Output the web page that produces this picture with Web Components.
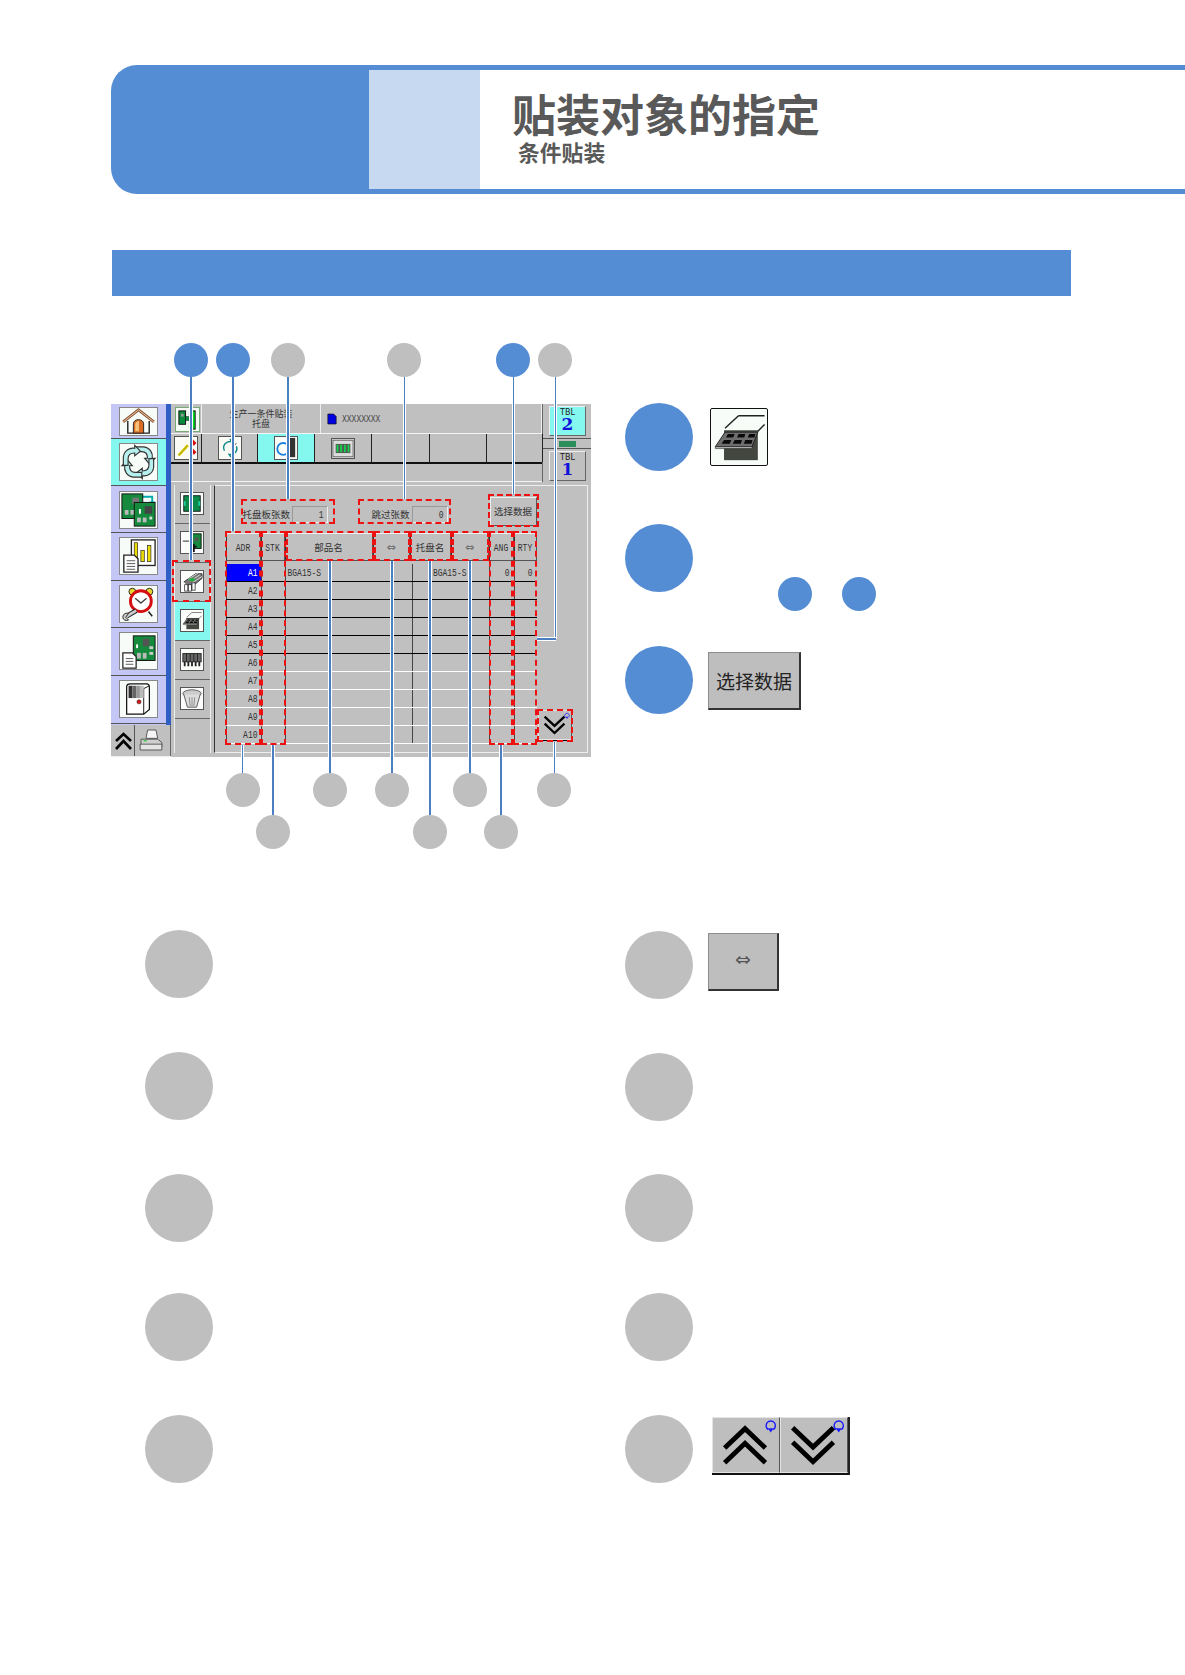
<!DOCTYPE html>
<html lang="zh">
<head>
<meta charset="utf-8">
<title>贴装对象的指定</title>
<style>
  html, body { margin: 0; background: #fff; }
  body { width: 1185px; height: 1675px; overflow: hidden; font-family: "Liberation Sans", "Noto Sans CJK SC", sans-serif; }
  .band { display: block; margin: 56px 0 0 111.500px; width: 959.500px; height: 46px; background: #548dd4; }
  .overview { display: grid; grid-template-columns: 625px 1fr; height: 590px; margin-top: 44px; }
  .steps-top { display: grid; grid-auto-rows: 121.3px; padding-top: 63px; --c: #548dd4; }
  .lower { display: grid; grid-template-columns: 144.500px 480.500px 1fr; }
  .lower-col { display: grid; grid-template-rows: 122px 121.500px 119.500px 122px 68px; }
  .lower-col.left { grid-column: 2; }
  .lower-col.right { grid-column: 3; padding-top: .5px; grid-template-rows: 122px 121.500px 118.500px 122px 68px; }
</style>
</head>
<body>

<script>
const BLADE = "M16 3H25C32 4 35 10 34 15H37L31 21 26 15H29C29 11 27 8 23 8H16Z";
const ICONS = {
  home: `<svg viewBox="0 0 39 29"><path d="M3 15 19.500 2 36 15" fill="none" stroke="#8a5a3a" stroke-width="3"/><path d="M3 15 19.500 2 36 15" fill="none" stroke="#f3c9a8" stroke-width="1"/><path d="M8 14V27H31V14" fill="none" stroke="#222" stroke-width="1.500"/><path d="M14 27V17C14 11 25 11 25 17V27Z" fill="#d96c22" stroke="#222"/><path d="M16 25V18C16 15 19 14 20 14V25Z" fill="#f4c27a"/></svg>`,
  cycle: `<svg viewBox="0 0 39 38">${[0, 90, 180, 270].map(a => `<path transform="rotate(${a} 19.500 19)" d="${BLADE}" fill="#b5f0ee" stroke="#333" stroke-width="1.200"/>`).join("")}</svg>`,
  boards: `<svg viewBox="0 0 39 38"><path d="M22 5H34V12" fill="none" stroke="#0aa" stroke-width="2"/><path d="M31 10 34 15 37 10Z" fill="#0aa"/><rect x="2" y="2" width="22" height="26" fill="#168a3c" stroke="#111"/><rect x="13" y="6" width="7" height="7" fill="#777"/><rect x="5" y="19" width="4" height="5" fill="#bbb"/><rect x="11" y="19" width="4" height="5" fill="#bbb"/><rect x="15" y="11" width="22" height="25" fill="#168a3c" stroke="#111"/><rect x="26" y="15" width="8" height="8" fill="#444"/><rect x="18" y="27" width="4" height="5" fill="#bbb"/><rect x="24" y="27" width="4" height="5" fill="#bbb"/><rect x="20" y="18" width="2" height="5" fill="#fff"/><rect x="31" y="26" width="3" height="3" fill="#ddd"/></svg>`,
  chart: `<svg viewBox="0 0 39 38"><rect x="12" y="2" width="25" height="27" fill="#fff" stroke="#222" stroke-width="1.400"/><rect x="15" y="5" width="3.600" height="20" fill="#eddc00" stroke="#222" stroke-width=".7"/><rect x="22" y="13" width="3.600" height="12" fill="#eddc00" stroke="#222" stroke-width=".7"/><rect x="29" y="8" width="3.600" height="17" fill="#eddc00" stroke="#222" stroke-width=".7"/><path d="M4 18H15L19 22V36H4Z" fill="#fff" stroke="#222" stroke-width="1.400"/><path d="M7 24H16M7 27H16M7 30H16M7 33H16" stroke="#555"/></svg>`,
  clock: `<svg viewBox="0 0 39 38"><circle cx="13" cy="6" r="3.600" fill="#e8d832" stroke="#222"/><circle cx="31" cy="6" r="3.600" fill="#e8d832" stroke="#222"/><path d="M14 27 11 31M30 27 34 32" stroke="#222" stroke-width="1.600"/><circle cx="22" cy="16" r="11" fill="#fff" stroke="#d50c10" stroke-width="3"/><path d="M16 13 22 18 28 13" fill="none" stroke="#444" stroke-width="1.500"/><path d="M17 26 7 32" stroke="#222" stroke-width="5"/><path d="M17 26 7 32" stroke="#ccc" stroke-width="3"/><path d="M3 33C3 29 7 28 9 29L6 33 9 36C6 37 3 36 3 33Z" fill="#ccc" stroke="#222"/></svg>`,
  pcbdoc: `<svg viewBox="0 0 39 38"><rect x="14" y="3" width="23" height="26" fill="#168a3c" stroke="#111"/><rect x="24" y="6" width="7" height="8" fill="#555"/><rect x="18" y="21" width="4" height="6" fill="#bbb"/><rect x="24" y="21" width="4" height="6" fill="#bbb"/><rect x="31" y="14" width="4" height="3" fill="#ccc"/><rect x="31" y="20" width="4" height="3" fill="#ccc"/><rect x="17" y="12" width="2" height="4" fill="#fff"/><path d="M3 21H13L17 25V37H3Z" fill="#fff" stroke="#222" stroke-width="1.300"/><path d="M6 27H14M6 30H14M6 33H14" stroke="#555"/></svg>`,
  machine: `<svg viewBox="0 0 39 38"><path d="M7 6C7 4 9 3 11 3H28C30 3 31 5 31 7V30L25 35H7Z" fill="#fff" stroke="#111" stroke-width="1.300"/><path d="M31 5 25 8V35" fill="none" stroke="#111" stroke-width="1"/><rect x="9" y="5" width="4" height="13" fill="#333"/><rect x="13" y="5" width="4" height="13" fill="#666"/><rect x="17" y="5" width="4" height="13" fill="#999"/><rect x="21" y="5" width="4" height="13" fill="#bbb"/><circle cx="20" cy="22" r="2.200" fill="#d81414" stroke="#333" stroke-width=".6"/></svg>`,
  board: `<svg viewBox="0 0 24 23"><rect x="3" y="3" width="18" height="17" fill="#0b8a4a" stroke="#111"/><rect x="10" y="3" width="1.500" height="17" fill="#111"/><rect x="3" y="9" width="2" height="5" fill="#1fd0a0"/><rect x="19" y="9" width="2" height="5" fill="#1fd0a0"/></svg>`,
  boardout: `<svg viewBox="0 0 24 23"><rect x="10" y="2" width="12" height="16" fill="#168a3c" stroke="#111"/><rect x="15" y="6" width="4" height="4" fill="#555"/><path d="M2 10H14" stroke="#666" stroke-width="1.500"/><path d="M14 13V22" stroke="#111" stroke-width="2"/><path d="M11 16H17" stroke="#111" stroke-width="2"/></svg>`,
  stack: `<svg viewBox="0 0 24 23"><path d="M3 12 16 3H23V8L10 19" fill="#777" stroke="#333"/><path d="M8 9 19 2M10 11 21 4M12 13 23 6" stroke="#ddd"/><rect x="9" y="8" width="6" height="3" fill="#1cb03c"/><rect x="4" y="15" width="3.400" height="7" fill="#fff" stroke="#222" stroke-width=".8"/><rect x="8" y="15" width="3.400" height="7" fill="#fff" stroke="#222" stroke-width=".8"/><rect x="12" y="13" width="3.400" height="8" fill="#fff" stroke="#222" stroke-width=".8"/></svg>`,
  tray: `<svg viewBox="0 0 57 58"><path d="M28 7H55M14 20 28 7M55 16 46 25" fill="none" stroke="#222" stroke-width="1.500"/><rect x="13" y="22" width="35" height="31" fill="#44473f"/><path d="M4 39 14 24H48L42 39Z" fill="#6e6e6e" stroke="#222"/><path d="M4 39H42V41H4Z" fill="#bbb" stroke="#222" stroke-width=".6"/><g fill="#0a0a0a"><path d="M17 26h7l-1.500 3.500h-7.500zM28 26h7l-1 3.500h-7.500zM39 26h6.500l-1 3.500h-7zM13 32h7.500l-1.500 4h-8.500zM24 32h7.500l-1 4h-8.500zM35 32h7.500l-1 4h-8z"/></g></svg>`,
  feeder: `<svg viewBox="0 0 24 23"><rect x="2" y="5" width="20" height="9" fill="#666" stroke="#222"/><path d="M6 5V14M10 5V14M14 5V14M18 5V14" stroke="#222"/><path d="M4 14V19M8 14V19M12 14V19M16 14V19M20 14V19" stroke="#222" stroke-width="2"/></svg>`,
  trash: `<svg viewBox="0 0 24 23"><ellipse cx="12" cy="6" rx="10" ry="4" fill="#ccc" stroke="#555"/><path d="M3 7 7 21H17L21 7" fill="#ddd" stroke="#555"/><path d="M9 10 10 20M12 10V20M15 10 14 20" stroke="#888"/></svg>`,
  doc: `<svg viewBox="0 0 12 14"><path d="M1 1H8L11 4V13H1Z" fill="#0000e0" stroke="#111" stroke-width=".8"/></svg>`,
  tool: `<svg viewBox="0 0 24 24"><path d="M4 20 14 9" stroke="#e4d400" stroke-width="3"/><path d="M4 20 14 9" stroke="#555" stroke-width=".6"/><path d="M18 4 22 8M17 13 22 18" stroke="#d50c10" stroke-width="4"/></svg>`,
  cyc2: `<svg viewBox="0 0 24 24"><path d="M6 15C3 9 8 4 14 5L12 2M19 10C21 15 17 20 11 19L13 22" fill="none" stroke="#188" stroke-width="1.500"/><path d="M13 12 19 7" stroke="#333"/></svg>`,
  blueo: `<svg viewBox="0 0 24 24"><rect x="12" y="1" width="10" height="21" fill="#333"/><rect x="8" y="2" width="5" height="20" fill="#fff"/><circle cx="9" cy="13" r="6.500" fill="none" stroke="#1a80e0" stroke-width="2"/></svg>`,
  ioboard: `<svg viewBox="0 0 24 20"><rect x="1" y="1" width="22" height="18" fill="#ddd" stroke="#666"/><rect x="4" y="5" width="16" height="10" fill="#555"/><path d="M6 6V14M10 6V14M14 6V14M18 6V14" stroke="#15d04a" stroke-width="2"/></svg>`,
  head: `<svg viewBox="0 0 24 24"><rect x="3" y="3" width="7" height="14" fill="#0a8a3c" stroke="#111"/><rect x="5" y="6" width="3" height="3" fill="#999"/><rect x="14" y="3" width="6" height="19" fill="#00dd22" stroke="#111"/><rect x="10" y="9" width="5" height="4" fill="#0a8a3c" stroke="#111" stroke-width=".5"/></svg>`,
  printer: `<svg viewBox="0 0 36 30"><path d="M14 3H24L26 13H12Z" fill="#f5f5f5" stroke="#444"/><path d="M6 14H26L31 18V23H6Z" fill="#cfcfcf" stroke="#444"/><path d="M5 20H31V27H5Z" fill="#e4e4e4" stroke="#444"/><path d="M9 16H13" stroke="#3c3" stroke-width="1.500"/></svg>`
};

class RsIcon extends HTMLElement {
  constructor() {
    super();
    this.attachShadow({mode: "open"});
  }
  connectedCallback() {
    this.shadowRoot.innerHTML = `
      <style>
        :host { display: block; }
        svg { display: block; width: 100%; height: 100%; }
      </style>
      ${ICONS[this.getAttribute("name")] || ""}`;
  }
}
customElements.define("rs-icon", RsIcon);

class RsHero extends HTMLElement {
  constructor() {
    super();
    this.attachShadow({mode: "open"}).innerHTML = `
      <style>
        :host { display: flex; height: 129px; margin: 65px 0 0 111px; }
        .lead { width: 258px; background: #548dd4; border-radius: 26px 0 0 26px; }
        .rest { flex: 1; display: flex; border-top: 5px solid #548dd4; border-bottom: 5px solid #548dd4; }
        .tint { width: 111px; background: #c6d9f0; }
        .text { flex: 1; padding: 20px 0 0 32px; color: #595959; font-weight: bold; font-family: "Liberation Sans", "Noto Sans CJK SC", sans-serif; }
        h1 { margin: 0; font-size: 44px; line-height: 54px; font-weight: bold; }
        p { margin: -3px 0 0 6px; font-size: 21.800px; line-height: 26px; }
      </style>
      <div class="lead"></div>
      <div class="rest">
        <div class="tint"></div>
        <div class="text"><h1><slot name="title"></slot></h1><p><slot name="sub"></slot></p></div>
      </div>`;
  }
}
customElements.define("rs-hero", RsHero);

// numbered dot, blank as in the source picture
class RsDot extends HTMLElement {
  constructor() {
    super();
    this.attachShadow({mode: "open"}).innerHTML = `
      <style>
        :host { display: block; width: var(--d, 68px); height: var(--d, 68px); border-radius: 50%; background: var(--c, #bfbfbf); flex: none; }
      </style>`;
  }
}
customElements.define("rs-dot", RsDot);

class RsStep extends HTMLElement {
  constructor() {
    super();
    this.attachShadow({mode: "open"}).innerHTML = `
      <style>
        :host { display: flex; align-items: flex-start; gap: var(--gap, 15px); }
        .body { padding-top: var(--top, 5px); }
      </style>
      <rs-dot></rs-dot>
      <div class="body"><slot></slot></div>`;
  }
}
customElements.define("rs-step", RsStep);

class RsKey extends HTMLElement {
  constructor() {
    super();
    this.attachShadow({mode: "open"}).innerHTML = `
      <style>
        :host { display: flex; align-items: center; justify-content: center; box-sizing: border-box; width: var(--w, 93px); height: 58px; padding-bottom: var(--pb, 0); background: #bebebe; border: 1px solid #8c8c8c; border-right: 2px solid #333; border-bottom: 2px solid #333; color: #222; font: 19px "Noto Sans CJK SC", sans-serif; }
      </style>
      <slot></slot>`;
  }
}
customElements.define("rs-key", RsKey);

class RsChevron extends HTMLElement {
  constructor() {
    super();
    this.attachShadow({mode: "open"});
  }
  connectedCallback() {
    const up = this.hasAttribute("up");
    this.shadowRoot.innerHTML = `
      <style>
        :host { display: block; box-sizing: border-box; background: #bebebe; border: 1px solid #e4e4e4; border-right-color: #555; width: 100%; height: 100%; }
        svg { display: block; width: 100%; height: 100%; }
      </style>
      <svg viewBox="0 0 68 56">
        <g fill="none" stroke="#000" stroke-width="5" transform="${up ? "" : "rotate(180 33 28)"}">
          <path d="M12 31 33 11 54 31"/><path d="M12 46 33 26 54 46"/>
        </g>
        <g fill="none" stroke="#1a1aff" stroke-width="1.500">
          <path d="M57 12A4.800 4.800 0 1 1 62 12"/><path d="M56.500 10.500H62.500L59.500 15Z" fill="#1a1aff" stroke="none"/>
        </g>
      </svg>`;
  }
}
customElements.define("rs-chevron", RsChevron);

class RsNav extends HTMLElement {
  constructor() {
    super();
    const items = [["home", 35, 29, 3], ["cycle", 47, 38, 4, true], ["boards", 47, 38, 5], ["chart", 48, 38, 4], ["clock", 47, 38, 4], ["pcbdoc", 48, 38, 4], ["machine", 48, 38, 4]];
    const html = items.map(([n, h, bh, top, on]) => `
      <div class="item${on ? " on" : ""}" style="height:${h}px;padding-top:${top}px">
        <div class="btn" style="height:${bh}px"><rs-icon name="${n}"></rs-icon></div>
      </div>`).join("");
    this.attachShadow({mode: "open"}).innerHTML = `
      <style>
        :host { display: flex; flex-direction: column; width: 60px; }
        .list { background: #c4c6f5; border-right: 5px solid #2f5fc4; height: 321px; }
        .item { box-sizing: border-box; border-bottom: 1.500px solid #555; }
        .item.on { background: #84f7ef; }
        .btn { box-sizing: border-box; width: 39px; margin-left: 8px; background: #f8fcf8; border: 1px solid #888; }
        rs-icon { width: 100%; height: 100%; }
        .foot { display: flex; height: 31px; background: #c0c0c0; border-bottom: 1px solid #eee; }
        .up { width: 24px; border-right: 1px solid #555; padding-top: 6px; box-sizing: border-box; }
        .up svg { display: block; width: 19px; height: 20px; margin-left: 3px; }
        .print { flex: 1; border-right: 1.500px solid #666; padding: 2px 0 0 1px; }
        .print rs-icon { width: 30px; height: 26px; }
      </style>
      <div class="list">${html}</div>
      <div class="foot">
        <div class="up"><svg viewBox="0 0 19 20"><path d="M2 10 9.500 3 17 10M2 18 9.500 10 17 18" fill="none" stroke="#000" stroke-width="2.600"/></svg></div>
        <div class="print"><rs-icon name="printer"></rs-icon></div>
      </div>`;
  }
}
customElements.define("rs-nav", RsNav);

class RsTopbar extends HTMLElement {
  constructor() {
    super();
    this.attachShadow({mode: "open"}).innerHTML = `
      <style>
        :host { display: grid; grid-template-columns: 372px 48px; height: 77px; background: #c0c0c0; }
        .rows { border-right: 1.500px solid #666; }
        .m { display: inline-block; transform: scaleY(1.4); }
        .head { display: grid; grid-template-columns: 31px 119px 1fr; height: 30px; border-bottom: 1px solid #f4f4f4; box-sizing: border-box; }
        .head > div { border-right: 1px solid #eee; box-sizing: border-box; }
        .ic { padding: 3px 0 0 4px; }
        .ic .f { width: 25px; height: 25px; background: #f6fbf6; border: 1px solid #7a7; box-sizing: border-box; }
        .title { font: 9px/10px "Noto Sans CJK SC", sans-serif; color: #333; text-align: center; padding-top: 5px; white-space: nowrap; }
        .doc { display: flex; align-items: center; gap: 5px; padding-left: 6px; font: 8px "Liberation Mono", monospace; color: #444; }
        .doc rs-icon { width: 10px; height: 12px; }
        .tabs { display: grid; grid-template-columns: 31px 56px 57px 57px 58px 57px 56px; height: 30px; border-bottom: 2px solid #111; box-sizing: border-box; }
        .tab { border-right: 1px solid #222; display: flex; justify-content: center; padding-top: 2px; box-sizing: border-box; }
        .tab.on { background: #84f7ef; }
        .tab rs-icon { width: 24px; height: 24px; background: #fbfbf6; border: 1px solid #555; box-sizing: border-box; }
        .tab rs-icon.g { background: #ddd; height: 21px; margin-top: 2px; }
        .spare { height: 17px; border-bottom: 1px solid #f4f4f4; }
        .tbl { padding: 2px 5px 0 6px; }
        .t { box-sizing: border-box; height: 30px; border: 1px solid #eee; border-right-color: #666; border-bottom-color: #666; text-align: center; font: 8px/8px "DejaVu Sans", sans-serif; color: #222; padding-top: 2px; }
        .t.on { background: #84f7ef; }
        .t b { display: block; font: bold 17px/15px "DejaVu Serif", serif; color: #1212d8; }
        .lamp { height: 9px; margin: 2px -5px 2px -6px; border-top: 1px solid #555; border-bottom: 1px solid #555; display: flex; justify-content: center; align-items: center; }
        .lamp i { display: block; width: 17px; height: 6px; background: #2a8f5a; }
      </style>
      <div class="rows">
        <div class="head">
          <div class="ic"><div class="f"><rs-icon name="head"></rs-icon></div></div>
          <div class="title">生产一条件贴装<br>托盘</div>
          <div class="doc"><rs-icon name="doc"></rs-icon><span class="m">XXXXXXXX</span></div>
        </div>
        <div class="tabs">
          <div class="tab"><rs-icon name="tool"></rs-icon></div>
          <div class="tab"><rs-icon name="cyc2"></rs-icon></div>
          <div class="tab on"><rs-icon name="blueo"></rs-icon></div>
          <div class="tab"><rs-icon class="g" name="ioboard"></rs-icon></div>
          <div class="tab"></div><div class="tab"></div><div class="tab"></div>
        </div>
        <div class="spare"></div>
      </div>
      <div class="tbl">
        <div class="t on">TBL<b>2</b></div>
        <div class="lamp"><i></i></div>
        <div class="t">TBL<b>1</b></div>
      </div>`;
  }
}
customElements.define("rs-topbar", RsTopbar);

class RsSide extends HTMLElement {
  constructor() {
    super();
    const names = ["board", "boardout", "stack", "tray", "feeder", "trash"];
    this.attachShadow({mode: "open"}).innerHTML = `
      <style>
        :host { display: block; width: 37px; border-left: 1px solid #eee; border-right: 1px solid #eee; box-sizing: border-box; }
        .c { box-sizing: border-box; height: 39px; border-bottom: 1px solid #666; padding: 7px 0 0 5px; }
        .c.on { background: #84f7ef; }
        rs-icon { width: 24px; height: 23px; background: #fafdf9; border: 1px solid #555; box-sizing: border-box; }
      </style>
      ${names.map(n => `<div class="c${n === "tray" ? " on" : ""}"><rs-icon name="${n}"></rs-icon></div>`).join("")}`;
  }
}
customElements.define("rs-side", RsSide);

class RsTable extends HTMLElement {
  constructor() {
    super();
    let rows = "";
    for (let i = 1; i <= 10; i++) {
      const first = i === 1;
      rows += `<div class="row ${i > 5 ? "w" : ""} ${first ? "first" : ""}">
        <div class="c adr${first ? " sel" : ""}"><span class="m">A${i}</span></div>
        <div class="c"></div>
        <div class="c name">${first ? '<span class="m">BGA15-S</span>' : ""}</div>
        <div class="c tray">${first ? '<span class="m">BGA15-S</span>' : ""}</div>
        <div class="c num">${first ? '<span class="m">0</span>' : ""}</div>
        <div class="c num">${first ? '<span class="m">0</span>' : ""}</div>
      </div>`;
    }
    this.attachShadow({mode: "open"}).innerHTML = `
      <style>
        :host { display: block; width: 311px; color: #333; font: 8px "Liberation Mono", monospace; }
        .m { display: inline-block; transform: scaleY(1.4); }
        .hd { display: grid; grid-template-columns: 35px 24px 88px 37px 41px 38px 25px 23px; height: 28px; }
        .hd div { display: flex; align-items: center; justify-content: center; border: 1px solid #eee; border-right-color: #555; border-bottom-color: #555; border-left-color: #333; }
        .hd .z { font: 9.500px "Noto Sans CJK SC", sans-serif; }
        .hd .s { font: 11px "DejaVu Sans", sans-serif; color: #666; }
        .row { display: grid; grid-template-columns: 35px 24px 127px 77px 25px 23px; height: 18px; border-bottom: 1px solid #000; box-sizing: border-box; }
        .row.w { border-bottom-color: #fff; }
        .row.first { height: 21px; padding-top: 3px; }
        .c { border-left: 1px solid #444; display: flex; align-items: center; box-sizing: border-box; line-height: 1; }
        .adr { justify-content: flex-end; padding-right: 3px; }
        .sel { background: #0000ff; color: #fff; }
        .name { padding-left: 2px; }
        .tray { justify-content: flex-end; padding-right: 22px; }
        .num { justify-content: flex-end; padding-right: 4px; }
      </style>
      <div class="hd">
        <div><span class="m">ADR</span></div><div><span class="m">STK</span></div>
        <div class="z">部品名</div><div class="s">⇔</div>
        <div class="z">托盘名</div><div class="s">⇔</div>
        <div><span class="m">ANG</span></div><div><span class="m">RTY</span></div>
      </div>
      ${rows}`;
  }
}
customElements.define("rs-table", RsTable);

class RsPanel extends HTMLElement {
  constructor() {
    super();
    this.attachShadow({mode: "open"}).innerHTML = `
      <style>
        :host { display: block; box-sizing: border-box; width: 374px; height: 268px; border-left: 1.500px solid #333; border-top: 1px solid #eee; border-right: 1px solid #eee; border-bottom: 1px solid #eee; padding: 11px 0 0 10.500px; }
        .m { display: inline-block; transform: scaleY(1.4); }
        .fields { display: flex; height: 36px; color: #333; }
        .lab { font: 9.500px/17px "Noto Sans CJK SC", sans-serif; margin-top: 9px; white-space: nowrap; }
        .val { box-sizing: border-box; width: 36px; height: 17px; margin-top: 9px; border: 1px solid #999; border-right-color: #eee; border-bottom-color: #eee; text-align: right; padding-right: 3px; font: 8px/15px "Liberation Mono", monospace; }
        .sel { box-sizing: border-box; width: 47px; height: 29px; margin-left: 42px; border: 1px solid #eee; border-right-color: #555; border-bottom-color: #555; font: 9.500px/27px "Noto Sans CJK SC", sans-serif; text-align: center; white-space: nowrap; }
        .grid { display: flex; align-items: flex-end; gap: 1px; }
        .chev { width: 34px; height: 30px; margin-bottom: 3px; border-bottom: 1px solid #000; }
      </style>
      <div class="fields">
        <div class="lab" style="width:49px;margin-left:17px">托盘板张数</div><div class="val"><span class="m">1</span></div>
        <div class="lab" style="width:40px;margin-left:44px">跳过张数</div><div class="val"><span class="m">0</span></div>
        <div class="sel">选择数据</div>
      </div>
      <div class="grid">
        <rs-table></rs-table>
        <div class="chev"><rs-chevron></rs-chevron></div>
      </div>`;
  }
}
customElements.define("rs-panel", RsPanel);

class RsMachine extends HTMLElement {
  constructor() {
    super();
    this.attachShadow({mode: "open"}).innerHTML = `
      <style>
        :host { display: grid; grid-template-columns: 60px 420px; width: 480px; height: 353px; background: #c0c0c0; }
        .low { display: flex; gap: 3px; padding: 4px 0 0 3px; }
      </style>
      <rs-nav></rs-nav>
      <div>
        <rs-topbar></rs-topbar>
        <div class="low"><rs-side></rs-side><rs-panel></rs-panel></div>
      </div>`;
  }
}
customElements.define("rs-machine", RsMachine);

// leader lines and dashed marks sit on top of the screen shot, so they go on a free canvas
class RsFigure extends HTMLElement {
  constructor() {
    super();
    const Y = 340;
    const blue = "#548dd4", grey = "#bfbfbf";
    const dots = [
      [190.7, 360, blue], [232.7, 360, blue], [287.7, 360, grey], [404.3, 360, grey], [513.3, 360, blue], [555.3, 360, grey],
      [242.7, 790, grey], [330, 790, grey], [391.7, 790, grey], [470, 790, grey], [554.3, 790, grey],
      [273, 832, grey], [430, 832, grey], [500.7, 832, grey]
    ];
    const lines = [
      [190.7, 377, 560, 2], [232.7, 377, 531, 2], [287.7, 377, 499, 2], [404.3, 377, 499, 1.5], [513.3, 377, 494, 1.5], [555.3, 377, 639, 1.5],
      [242.7, 745, 773, 1.5], [273, 745, 815, 1.5], [330, 561, 773, 2], [391.7, 561, 773, 2], [430, 561, 815, 2], [470, 561, 773, 2], [500.7, 745, 815, 2], [554.3, 742, 773, 1.5]
    ];
    const boxes = [
      [172, 560, 211, 602], [241, 499, 335, 524], [358, 499, 451, 524], [488, 494, 539, 527],
      [225, 531, 261, 745], [261, 531, 286, 745], [286, 531, 374, 561], [374, 531, 410, 561],
      [410, 531, 452, 561], [452, 531, 489, 561], [489, 531, 513, 745], [513, 531, 537, 745], [537, 709, 573, 742]
    ];
    let html = "";
    lines.forEach(([x, a, b, w]) => {
      html += `<i class="ln" style="left:${x - w / 2}px;top:${a - Y}px;height:${b - a}px;width:${w}px"></i>`;
    });
    html += `<i class="ln h" style="left:537px;top:${638 - Y}px;width:19px;height:1.500px"></i>`;
    boxes.forEach(([x1, y1, x2, y2]) => {
      html += `<i class="bx" style="left:${x1}px;top:${y1 - Y}px;width:${x2 - x1}px;height:${y2 - y1}px"></i>`;
    });
    dots.forEach(([x, y, c]) => {
      html += `<rs-dot style="--d:34px;--c:${c};position:absolute;left:${x - 17}px;top:${y - 17 - Y}px"></rs-dot>`;
    });
    this.attachShadow({mode: "open"}).innerHTML = `
      <style>
        :host { display: block; position: relative; padding: 64px 0 0 111px; height: 526px; }
        i { position: absolute; display: block; box-sizing: border-box; }
        .ln { background: #4a7fc1; box-shadow: 1px 0 0 #fff, -1px 0 0 #fff; }
        .ln.h { box-shadow: 0 1px 0 #fff, 0 -1px 0 #fff; }
        .bx { border: 2px dashed #ee1111; }
      </style>
      <rs-machine></rs-machine>
      ${html}`;
  }
}
customElements.define("rs-figure", RsFigure);
</script>

<rs-hero>
  <span slot="title">贴装对象的指定</span>
  <span slot="sub">条件贴装</span>
</rs-hero>
<div class="band"></div>

<section class="overview">
  <rs-figure></rs-figure>
  <div class="steps-top">
    <rs-step style="--gap:17px">
      <div style="box-sizing:border-box;width:58px;height:58px;background:#f8fcf8;border:1.500px solid #111;border-radius:2px"><rs-icon name="tray" style="width:100%;height:100%"></rs-icon></div>
    </rs-step>
    <rs-step style="--gap:0;--top:53px">
      <div style="display:flex;gap:30px;padding-left:85px">
        <rs-dot style="--d:34px"></rs-dot>
        <rs-dot style="--d:34px"></rs-dot>
      </div>
    </rs-step>
    <rs-step style="--top:6px">
      <rs-key>选择数据</rs-key>
    </rs-step>
  </div>
</section>

<section class="lower">
  <div class="lower-col left">
    <rs-dot></rs-dot><rs-dot></rs-dot><rs-dot></rs-dot><rs-dot></rs-dot><rs-dot></rs-dot>
  </div>
  <div class="lower-col right">
    <rs-step style="--top:2px"><rs-key style="--w:71px;--pb:4px;font-family:'DejaVu Sans',sans-serif;color:#555">⇔</rs-key></rs-step>
    <rs-dot></rs-dot><rs-dot></rs-dot><rs-dot></rs-dot>
    <rs-step style="--gap:19px;--top:2px">
      <div style="display:grid;grid-template-columns:68px 68px;height:56px;width:136px;border-bottom:2px solid #111;border-right:2px solid #222">
        <rs-chevron up></rs-chevron><rs-chevron></rs-chevron>
      </div>
    </rs-step>
  </div>
</section>
</body>
</html>
